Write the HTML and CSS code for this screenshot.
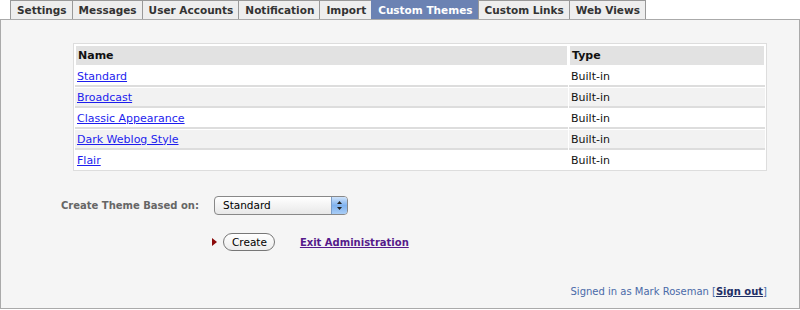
FILE: index.html
```html
<!DOCTYPE html>
<html lang="en">
	<head>
		<meta charset="UTF-8" />
		<title>Custom Themes</title>
		<link rel="stylesheet" href="styles.css">
	</head>
	<body>
		<ul class="tabs">
			<li class="tab">Settings</li>
			<li class="tab">Messages</li>
			<li class="tab">User Accounts</li>
			<li class="tab">Notification</li>
			<li class="tab">Import</li>
			<li class="tab tab-active">Custom Themes</li>
			<li class="tab">Custom Links</li>
			<li class="tab">Web Views</li>
		</ul>
		<div class="panel">
			<table class="themes">
				<thead>
					<tr>
						<th class="col-name">Name</th>
						<th class="col-type">Type</th>
					</tr>
				</thead>
				<tbody>
					<tr><td><a href="#">Standard</a></td><td>Built-in</td></tr>
					<tr class="alt"><td><a href="#">Broadcast</a></td><td>Built-in</td></tr>
					<tr><td><a href="#">Classic Appearance</a></td><td>Built-in</td></tr>
					<tr class="alt"><td><a href="#">Dark Weblog Style</a></td><td>Built-in</td></tr>
					<tr><td><a href="#">Flair</a></td><td>Built-in</td></tr>
				</tbody>
			</table>
			<div class="form-row">
				<label class="form-label">Create Theme Based on:</label>
				<div class="select">
					<span class="select-text">Standard</span>
					<span class="select-arrows">
						<svg width="7" height="11" viewBox="0 0 7 11">
							<path d="M3.5 1 L6 4 L1 4 Z" fill="#222" />
							<path d="M3.5 10 L6 7 L1 7 Z" fill="#222" />
						</svg>
					</span>
				</div>
			</div>
			<div class="action-row">
				<span class="marker"></span>
				<span class="button">Create</span>
				<a class="exit-link" href="#">Exit Administration</a>
			</div>
			<div class="footer">
				Signed in as Mark Roseman [<a class="signout" href="#">Sign out</a>]
			</div>
		</div>
	</body>
</html>
```

FILE: styles.css
```css
body {
	margin: 0;
	font-family: "DejaVu Sans", Verdana, sans-serif;
	font-size: 11px;
	background: #fff;
}
.tabs {
	display: flex;
	margin: 0 0 0 10px;
	padding: 0;
	list-style: none;
}
.tab {
	height: 18px;
	line-height: 19px;
	padding: 0 5px 0 6px;
	border: 1px solid #999;
	border-bottom: none;
	margin-right: -1px;
	background: #eee;
	color: #333;
	font-weight: bold;
	font-size: 10.5px;
}
.tab-active {
	background: #6b82b3;
	border-color: #6b82b3;
	color: #fff;
}
.panel {
	height: 288px;
	border: 1px solid #aaa;
	background: #f5f5f5;
	display: flex;
	flex-direction: column;
}
.themes {
	margin: 23px 33px 0 72px;
	border: 1px solid #ddd;
	border-spacing: 1px;
	background: #fff;
	width: 694px;
}
.themes th {
	text-align: left;
	background: #e2e2e2;
	height: 19px;
	padding: 0 2px;
	color: #111;
	border: 1px solid #fff;
}
.themes td {
	height: 18px;
	padding: 0 2px;
	color: #111;
	border-bottom: 2px solid #ddd;
	background: #fff;
}
.themes tr.alt td {
	background: #f2f2f2;
}
.themes tbody tr:last-child td {
	border-bottom: none;
}
.col-type {
	width: 190px;
}
.themes a {
	color: #1d1dee;
}
.form-row {
	display: flex;
	align-items: center;
	margin: 25px 0 0 60px;
}
.form-label {
	width: 153px;
	color: #666;
	font-weight: bold;
	font-size: 10px;
}
.select {
	display: flex;
	width: 132px;
	height: 17px;
	border: 1px solid #888;
	border-radius: 4px;
	background: linear-gradient(#fff, #e8e8e8);
	overflow: hidden;
}
.select-text {
	flex: 1;
	line-height: 17px;
	padding-left: 8px;
	color: #000;
	font-size: 10.5px;
}
.select-arrows {
	width: 15px;
	display: flex;
	align-items: center;
	justify-content: center;
	background: linear-gradient(#cfe3fb, #7fb2ee 50%, #a9cdf6);
	border-left: 1px solid #7b9dc8;
}
.action-row {
	display: flex;
	align-items: center;
	margin: 18px 0 0 211px;
}
.marker {
	width: 0;
	height: 0;
	border-top: 4px solid transparent;
	border-bottom: 4px solid transparent;
	border-left: 5px solid #8b0a0a;
	margin-right: 6px;
}
.button {
	height: 16px;
	line-height: 16px;
	padding: 0 7px 0 8px;
	border: 1px solid #777;
	border-radius: 9px;
	background: linear-gradient(#fff, #ececec);
	color: #000;
	font-size: 10.5px;
}
.exit-link {
	margin-left: 25px;
	color: #551a8b;
	font-weight: bold;
	font-size: 10px;
}
.footer {
	margin-top: auto;
	margin-bottom: 11px;
	text-align: right;
	padding-right: 32px;
	color: #4a6aa8;
	font-size: 10px;
}
.signout {
	color: #1f2f66;
	font-weight: bold;
}
```
